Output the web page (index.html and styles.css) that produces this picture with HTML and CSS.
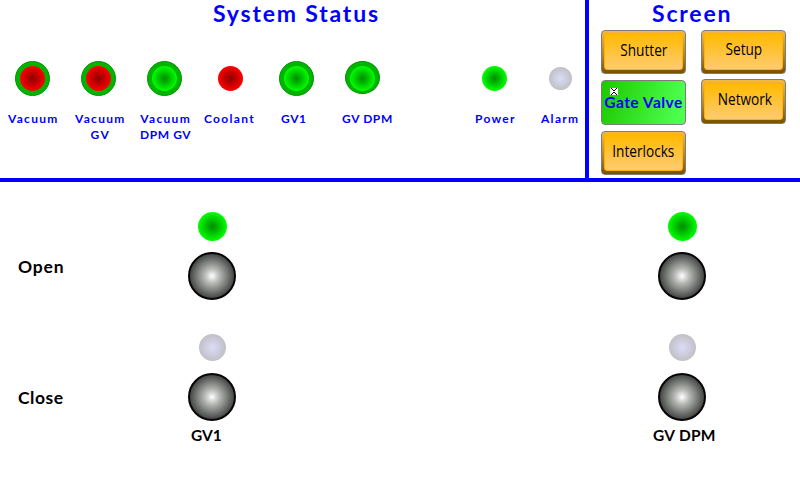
FILE: index.html
```html
<!DOCTYPE html>
<html lang="en">
<head>
<meta charset="utf-8">
<title>Gate Valve</title>
<link rel="stylesheet" href="styles.css">
</head>
<body>
<div class="panel">
  <header class="top">
    <section class="status">
      <h1 class="title title-status">System Status</h1>
      <div class="lamps">
        <div class="cell"><i class="ring"><i class="lamp red"></i></i><span class="label l1">Vacuum</span></div>
        <div class="cell"><i class="ring"><i class="lamp red"></i></i><span class="label l2">Vacuum<br>GV</span></div>
        <div class="cell"><i class="ring"><i class="lamp green"></i></i><span class="label l3">Vacuum<br><span class="caps">DPM GV</span></span></div>
        <div class="cell"><i class="ring bare"><i class="lamp red"></i></i><span class="label l4">Coolant</span></div>
        <div class="cell"><i class="ring"><i class="lamp green"></i></i><span class="label l5 caps">GV1</span></div>
        <div class="cell"><i class="ring short"><i class="lamp green"></i></i><span class="label l6 caps">GV DPM</span></div>
        <div class="cell"></div>
        <div class="cell"><i class="ring bare"><i class="lamp green"></i></i><span class="label l7">Power</span></div>
        <div class="cell"><i class="ring bare"><i class="lamp idle"></i></i><span class="label l8">Alarm</span></div>
      </div>
    </section>
    <nav class="screens">
      <h2 class="title title-screen">Screen</h2>
      <div class="columns">
        <div class="col">
          <button class="btn"><span class="face"><span class="text">Shutter</span></span></button>
          <button class="btn active"><svg class="cross" viewBox="0 0 8 7" width="8" height="7" shape-rendering="crispEdges"><path fill="#fff" d="M0 0h8v7h-8z"/><path fill="#000" d="M1 0h1v1h-1zM6 0h1v1h-1zM2 1h1v1h-1zM5 1h1v1h-1zM3 2h2v1h-2zM3 4h2v1h-2zM2 5h1v1h-1zM5 5h1v1h-1zM1 6h1v1h-1zM6 6h1v1h-1z"/></svg><span class="b-gate">Gate Valve</span></button>
          <button class="btn"><span class="face"><span class="text">Interlocks</span></span></button>
        </div>
        <div class="col col-right">
          <button class="btn"><span class="face high"><span class="text">Setup</span></span></button>
          <button class="btn tall"><span class="face high net"><span class="text">Network</span></span></button>
        </div>
      </div>
    </nav>
  </header>
  <main class="valves">
    <div class="names"><span class="name open">Open</span><span class="name close">Close</span></div>
    <div class="valve">
      <i class="led green"></i><i class="knob"></i><i class="led idle"></i><i class="knob"></i>
      <span class="name gv1">GV1</span>
    </div>
    <div class="valve">
      <i class="led green"></i><i class="knob"></i><i class="led idle"></i><i class="knob"></i>
      <span class="name dpm">GV DPM</span>
    </div>
  </main>
</div>
</body>
</html>
```
FILE: styles.css
```css
* { box-sizing: border-box; }
body { margin: 0; background: #fff; font-family: Lato, "Open Sans", sans-serif; }
.panel { width: 800px; height: 480px; overflow: hidden; }
.top { display: flex; height: 182px; border-bottom: 4px solid #00f; }
.status { width: 589px; flex: none; border-right: 4px solid #00f; }
.screens { flex: 1; }
.title { margin: 0; height: 30px; color: #00f; font-size: 23px; line-height: 27px; font-weight: 700; letter-spacing: 1.8px; white-space: nowrap; }
.title-status { padding-left: 213px; }
.title-screen { padding-left: 63px; }
.lamps { display: flex; padding-top: 31px; }
.cell { width: 66px; flex: none; }
.ring { display: flex; width: 35px; height: 35px; margin-left: 15px; border-radius: 50%; background: #00b400; border: 1px solid #009600; align-items: center; justify-content: center; }
.ring.bare { background: none; border-color: transparent; }
.ring.short { height: 33px; margin-bottom: 2px; padding-top: 2px; }
.lamp { width: 25px; height: 25px; border-radius: 50%; flex: none; }
.red { background: radial-gradient(closest-side, #8c0000, #f00); }
.green { background: radial-gradient(closest-side, #008c00, #0f0); }
.idle { background: radial-gradient(closest-side, #dcdcf8, #c0c0c6); }
.lamp.idle { width: 23px; height: 23px; }
.label { display: block; width: max-content; padding-top: 15px; text-align: center; color: #00f; font-size: 12px; line-height: 16px; font-weight: 700; letter-spacing: 1.3px; white-space: nowrap; }
.caps { letter-spacing: .6px; }
.l1 { margin-left: 8px; }
.l2 { margin-left: 9px; }
.l3 { margin-left: 8px; }
.l4 { margin-left: 6px; }
.l5 { margin-left: 17px; }
.l6 { margin-left: 12px; }
.l7 { margin-left: 13px; }
.l8 { margin-left: 13px; }
.columns { display: flex; gap: 15px; padding-left: 12px; }
.col { display: flex; flex-direction: column; gap: 6px; }
.col-right { gap: 5px; }
.btn { display: block; position: relative; width: 85px; height: 44px; padding: 2px 2px 3px; border: 1px solid #7c7c7c; border-radius: 4px; background: linear-gradient(#f5b840, #b98120 60%, #7a5000); font-family: "Open Sans", sans-serif; font-size: 15.5px; color: #000; }
.btn.tall { height: 45px; }
.face { display: block; height: 37px; border: 1px solid #ffb400; border-radius: 3px; background: linear-gradient(#ffba00, #ffcb72); line-height: 33px; text-align: center; white-space: nowrap; }
.high { line-height: 31px; }
.net { padding-left: 3px; }
.text { display: inline-block; transform: scaleX(.88); margin: 0 -5px; }
.btn.active { height: 45px; padding: 0; background: linear-gradient(105deg, #1ec800, #4cff4c 90%); color: #00f; font-weight: 700; font-family: Lato, sans-serif; font-size: 15.5px; letter-spacing: .5px; }
.cross { position: absolute; left: 8px; top: 7px; }
.b-gate { display: block; line-height: 41px; white-space: nowrap; }
.valves { display: flex; height: 298px; }
.names { width: 188px; flex: none; padding-left: 18px; padding-top: 73px; }
.name { display: block; width: max-content; font-size: 17.5px; line-height: 24px; font-weight: 700; letter-spacing: .8px; white-space: nowrap; }
.close { margin-top: 107px; letter-spacing: .5px; }
.valve { width: 48px; flex: none; margin-right: 422px; padding-top: 30px; }
.valve + .valve { margin-right: 0; }
.led { display: block; width: 29px; height: 29px; margin: 0 0 11px 10px; border-radius: 50%; }
.led.idle { width: 27px; height: 27px; margin: 34px 0 12px 11px; }
.knob { display: block; width: 48px; height: 48px; border: 2px solid #0a0408; border-radius: 50%; background: radial-gradient(closest-side, #fff, #b4b6b2 35%, #444844); }
.gv1, .dpm { margin: 2px 0 0 3px; font-size: 15.5px; letter-spacing: .3px; }
.gv1 { letter-spacing: 0; }
.dpm { margin-left: -5px; }
```
